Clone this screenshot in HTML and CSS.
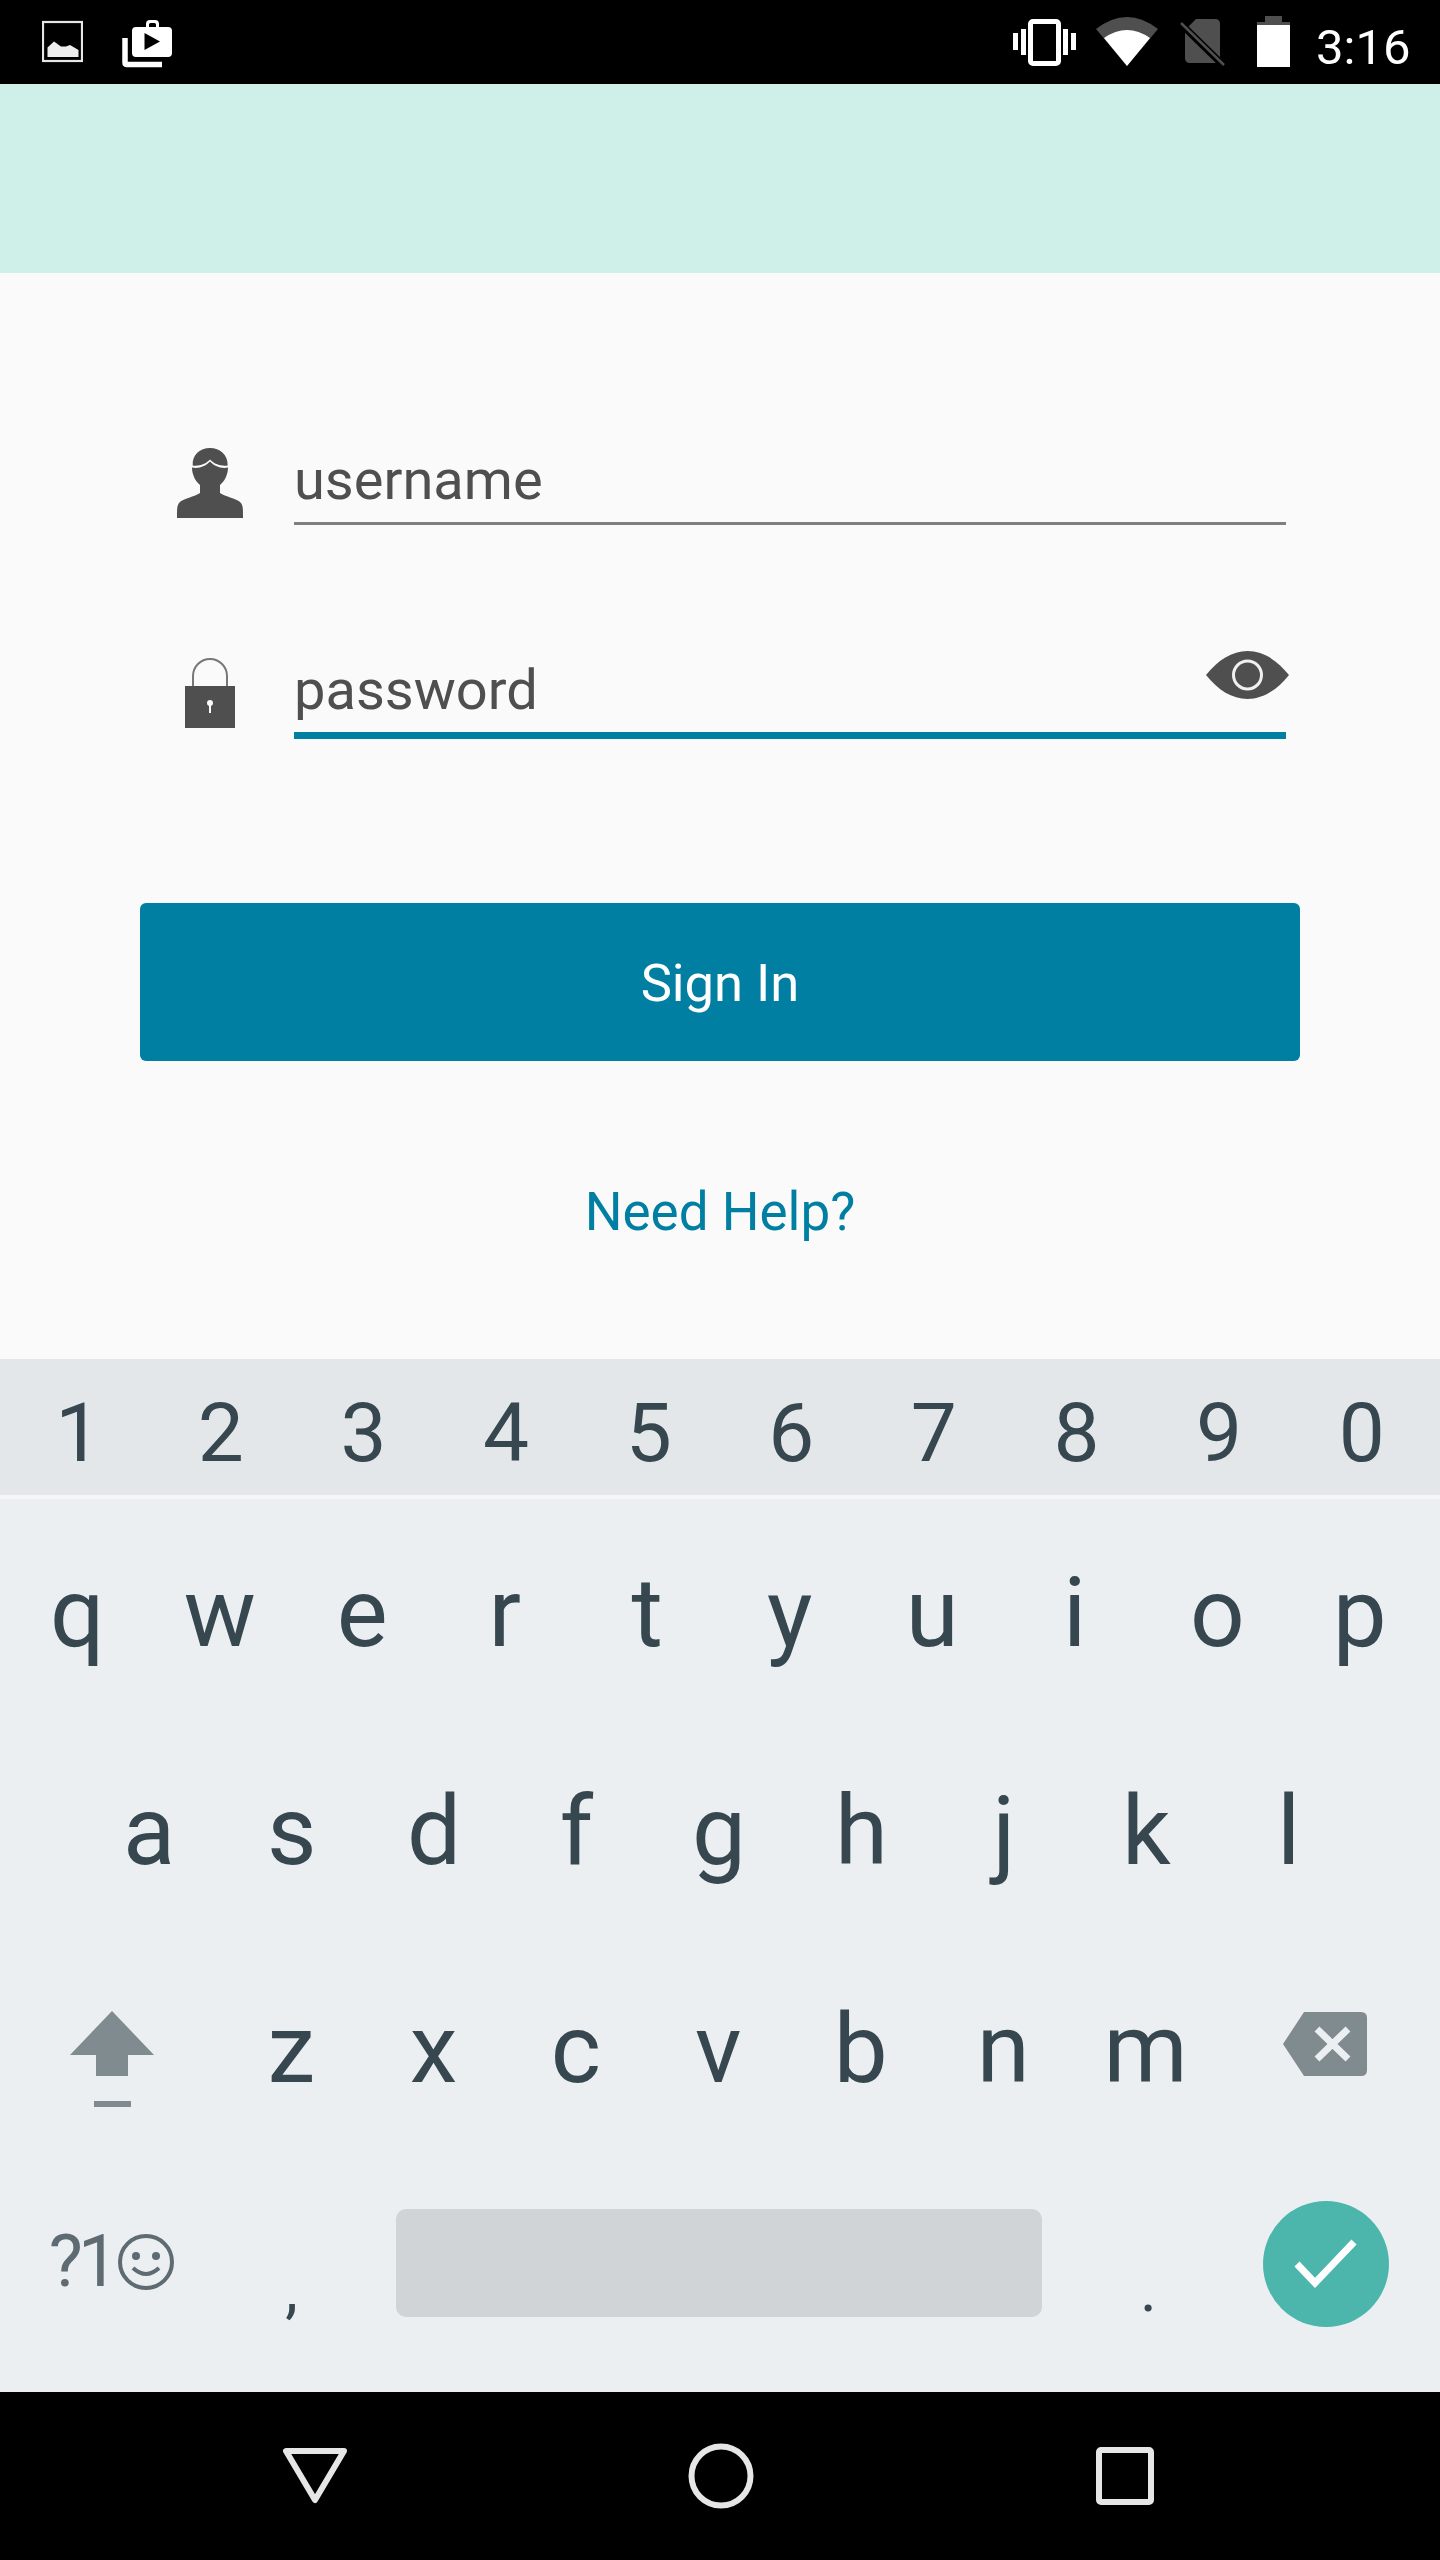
FILE: index.html
```html
<!DOCTYPE html>
<html lang="en">
<head>
<meta charset="utf-8">
<title>Sign In</title>
<link rel="stylesheet" href="styles.css">
</head>
<body>
<div class="page">
  <header class="status">
    <div class="status-left">
      <svg class="ic-image" viewBox="42 0 41 84"><rect x="43" y="22" width="39" height="39" fill="none" stroke="#e6e6e6" stroke-width="2.2"/><path d="M47.500 57V47.500L54 41.500 61 46.500 66 46.500 70 45 78.500 50V57Z" fill="#eee"/></svg>
      <svg class="ic-bag" viewBox="122 0 50 84"><path d="M125 38V62.500Q125 64.500 127 64.500H162" fill="none" stroke="#fff" stroke-width="5.500"/><path d="M146 27V24Q146 20 150 20H155Q159 20 159 24V27H168Q172 27 172 31V53Q172 57 168 57H136Q132 57 132 53V31Q132 27 136 27ZM149 27H156V24.500Q156 23 154.500 23H150.500Q149 23 149 24.500ZM144.500 33V50L160 41.500Z" fill="#fff" fill-rule="evenodd"/></svg>
    </div>
    <div class="status-right">
      <svg class="ic-vibrate" viewBox="1013 0 63 84"><rect x="1030.500" y="21.500" width="28" height="42" rx="2.500" fill="none" stroke="#fff" stroke-width="5"/><path d="M1013 33h5v17h-5zM1021 29h5v26h-5zM1063 29h5v26h-5zM1071 33h5v17h-5z" fill="#fff"/></svg>
      <svg class="ic-wifi" viewBox="1096 0 62 84"><path d="M1096 29Q1127 5 1158 29L1127 66Z" fill="#4f4f4f"/><path d="M1104 38Q1127 22 1150 38L1127 66Z" fill="#fff"/></svg>
      <svg class="ic-sim" viewBox="1180 0 45 84"><path d="M1196 19H1215Q1220 19 1220 24V63H1190Q1185 63 1185 58V30Z" fill="#4f4f4f"/><path d="M1180 23L1224 66" stroke="#000" stroke-width="7"/><path d="M1181 23L1224 65" stroke="#4f4f4f" stroke-width="2.500"/></svg>
      <svg class="ic-battery" viewBox="1257 0 33 84"><path d="M1265 16H1282V22H1290V67H1257V22H1265Z" fill="#4f4f4f"/><rect x="1257" y="25" width="33" height="42" fill="#fff"/></svg>
      <span class="clock">3:16</span>
    </div>
  </header>
  <div class="banner"></div>
  <main class="form">
    <div class="form-row">
      <svg class="ic-field" viewBox="0 0 66 70"><path d="M15.700 17.500C15 7 23 0 33 0 43 0 51 7 50.700 17.500 44 18.500 37 16 33 11.500 29 16 22 18.500 15.700 17.500Z" fill="#4f4f4f"/><path d="M15 19.500C22 21 29 18 33 13.500 37 18 44 21 51 19.500 51 26 48 33 43 37V45C48 49 60 50 64 55 66 58 66 60 66 70H0C0 60 0 58 2 55 6 50 18 49 23 45V37C18 33 15 26 15 19.500Z" fill="#4f4f4f"/></svg>
      <div class="field">username</div>
    </div>
    <div class="form-row form-row-active">
      <svg class="ic-field" viewBox="0 0 66 70"><path d="M16 28V18A17 17 0 0 1 50 18V28" fill="none" stroke="#777" stroke-width="2"/><rect x="8" y="28" width="50" height="42" fill="#4f4f4f"/><circle cx="33" cy="45" r="3" fill="#fafafa"/><rect x="32" y="45" width="2" height="10" fill="#fafafa"/></svg>
      <div class="field field-active">password
        <svg class="ic-eye" viewBox="0 0 83 48"><path d="M0 24C12 9 26 0 41.500 0S71 9 83 24C71 39 57 48 41.500 48S12 39 0 24Z" fill="#4f4f4f"/><circle cx="41.500" cy="24" r="14" fill="none" stroke="#f0f0f0" stroke-width="3"/></svg>
      </div>
    </div>
    <button class="signin" type="button">Sign In</button>
    <a class="help">Need Help?</a>
  </main>
  <section class="keyboard">
    <div class="digits">
      <span>1</span><span>2</span><span>3</span><span>4</span><span>5</span><span>6</span><span>7</span><span>8</span><span>9</span><span>0</span>
    </div>
    <div class="kb-line"></div>
    <div class="keys">
      <div class="row row-10"><span>q</span><span>w</span><span>e</span><span>r</span><span>t</span><span>y</span><span>u</span><span>i</span><span>o</span><span>p</span></div>
      <div class="row row-9"><span>a</span><span>s</span><span>d</span><span>f</span><span>g</span><span>h</span><span>j</span><span>k</span><span>l</span></div>
      <div class="row row-shift">
        <span class="icon-key"><svg class="ic-shift" viewBox="0 0 84 96"><path d="M42 0L84 44H58V65H26V44H0Z" fill="#7f8b8f"/><rect x="24" y="90" width="37" height="6" fill="#7f8b8f"/></svg></span>
        <span>z</span><span>x</span><span>c</span><span>v</span><span>b</span><span>n</span><span>m</span>
        <span class="icon-key"><svg class="ic-back" viewBox="0 0 84 64"><path d="M21 0H78Q84 0 84 6V58Q84 64 78 64H21L0 32Z" fill="#7f8b8f"/><path d="M34 17L65 47M65 17L34 47" stroke="#eceff2" stroke-width="7"/></svg></span>
      </div>
      <div class="row row-bottom">
        <span class="sym"><span class="sym-text">?1</span><svg class="ic-smile" viewBox="0 0 56 56"><circle cx="28" cy="28" r="26" fill="none" stroke="#5e6b72" stroke-width="4"/><circle cx="18" cy="22" r="4" fill="#5e6b72"/><circle cx="38" cy="22" r="4" fill="#5e6b72"/><path d="M15 34Q28 46 41 34" fill="none" stroke="#5e6b72" stroke-width="4"/></svg></span>
        <span class="punct">,</span>
        <span class="space-cell"><span class="spacebar"></span></span>
        <span class="punct">.</span>
        <span class="icon-key"><span class="enter"><svg class="ic-check" viewBox="0 0 64 50"><path d="M3 25L21 44 60 3" fill="none" stroke="#fff" stroke-width="7"/></svg></span></span>
      </div>
    </div>
  </section>
  <nav class="navbar">
    <svg class="ic-back-nav" viewBox="0 0 66 58"><path d="M4 4H62L33 53Z" fill="none" stroke="#e6e6e6" stroke-width="6" stroke-linejoin="round"/></svg>
    <svg class="ic-home" viewBox="0 0 66 66"><circle cx="33" cy="33" r="29.500" fill="none" stroke="#e6e6e6" stroke-width="6"/></svg>
    <svg class="ic-recent" viewBox="0 0 58 58"><rect x="3" y="3" width="52" height="52" rx="2" fill="none" stroke="#e6e6e6" stroke-width="6"/></svg>
  </nav>
</div>
</body>
</html>
```
FILE: styles.css
```css
* { box-sizing: border-box; }
html, body { margin: 0; padding: 0; }
body { font-family: Roboto, "Noto Sans", sans-serif; background: #fafafa; }
.page { width: 1440px; height: 2560px; display: flex; flex-direction: column; overflow: hidden; }
svg { display: block; }

.status { height: 84px; flex: none; background: #000; display: flex; justify-content: space-between; }
.status-left, .status-right { display: flex; height: 84px; }
.status-left { padding-left: 42px; }
.status-right { padding-right: 29px; }
.status svg { height: 84px; }
.ic-image { width: 41px; }
.ic-bag { width: 50px; margin-left: 39px; }
.ic-vibrate { width: 63px; }
.ic-wifi { width: 62px; margin-left: 20px; }
.ic-sim { width: 45px; margin-left: 22px; }
.ic-battery { width: 33px; margin-left: 32px; }
.clock { margin-left: 26px; width: 95px; color: #fff; font-size: 49px; line-height: 84px; padding-top: 6px; }

.banner { height: 189px; flex: none; background: #cff0e9; }

.form { flex: 1; background: #fafafa; padding-top: 174px; display: flex; flex-direction: column; align-items: center; }
.form-row { width: 1109px; display: flex; gap: 51px; align-self: flex-start; margin-left: 177px; }
.form-row-active { margin-top: 132px; }
.ic-field { width: 66px; height: 70px; margin-top: 1px; flex: none; }
.field { position: relative; width: 992px; height: 78px; padding-bottom: 9px; border-bottom: 3px solid #7f7f7f; color: #4f4f4f; font-size: 56px; line-height: 66px; }
.field-active { height: 82px; border-bottom: 7px solid #007fa3; }
.ic-eye { position: absolute; right: -3px; top: -6px; width: 83px; height: 48px; }
.signin { margin-top: 164px; width: 1160px; height: 158px; flex: none; border: 0; border-radius: 6px; background: #007fa3; color: #fff; font: 400 52.500px/66px Roboto, sans-serif; padding: 2px 0 0; }
.help { margin-top: 120px; color: #007fa3; font-size: 53px; line-height: 62px; }

.keyboard { flex: none; height: 1033px; background: #eceff2; color: #37474f; font-size: 96px; }
.digits { height: 136px; background: #e3e7ea; padding: 0 7px; display: grid; grid-template-columns: repeat(10, 1fr); text-align: center; font-size: 82px; line-height: 148px; }
.kb-line { height: 4px; background: #f4f6f8; }
.keys { display: flex; flex-direction: column; }
.row { height: 218px; display: grid; grid-template-rows: 218px; text-align: center; line-height: 228px; }
.row-10 { grid-template-columns: repeat(10, 1fr); padding: 0 9px 0 6px; }
.row-9 { grid-template-columns: repeat(9, 1fr); padding: 0 80px 0 78px; }
.row-shift { grid-template-columns: 214px repeat(7, 142.400px) 1fr; padding: 0 6px; }
.row-bottom { grid-template-columns: 214.200px 142.800px 714px 142.800px 214.200px; padding: 0 6px; }
.icon-key { display: flex; align-items: center; justify-content: center; }
.ic-shift { width: 84px; height: 96px; margin-right: 2px; margin-top: 30px; }
.ic-back { width: 84px; height: 64px; }
.sym { display: flex; align-items: center; justify-content: center; color: #5e6b72; padding-right: 3px; }
.sym-text { font-size: 72px; line-height: 72px; letter-spacing: -5px; }
.ic-smile { width: 56px; height: 56px; margin-left: 5px; }
.punct { font-size: 64px; line-height: 274px; }
.space-cell { display: flex; align-items: center; justify-content: center; }
.spacebar { width: 646px; height: 108px; background: #d0d4d7; border-radius: 10px; margin-top: 2px; margin-left: -1px; }
.enter { width: 126px; height: 126px; border-radius: 50%; background: #4db6ac; display: flex; align-items: center; justify-content: center; margin-top: 4px; margin-right: 2px; }
.ic-check { width: 64px; height: 50px; }

.navbar { flex: none; height: 168px; background: #000; display: flex; align-items: center; padding-left: 282px; }
.ic-back-nav { width: 66px; height: 58px; }
.ic-home { width: 66px; height: 66px; margin-left: 340px; margin-top: 0; }
.ic-recent { width: 58px; height: 58px; margin-left: 342px; }
```
